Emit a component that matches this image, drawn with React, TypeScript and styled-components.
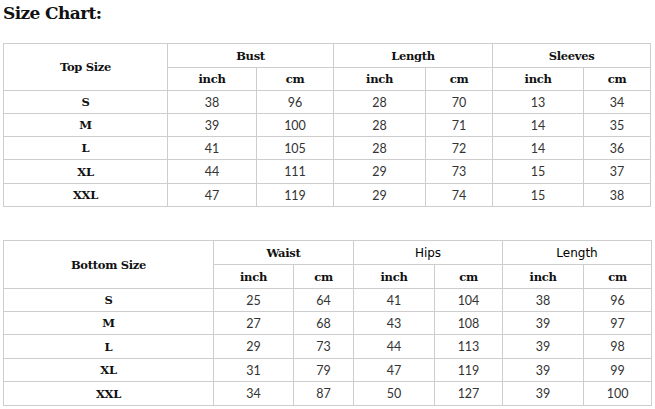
import React from "react";
import styled, { createGlobalStyle } from "styled-components";

const Global = createGlobalStyle`
  html, body { margin: 0; padding: 0; background: #fff; }
  body { width: 655px; height: 409px; overflow: hidden; }
`;

const Page = styled.div`
  padding: 3px 0 0 3px;
  display: flex;
  flex-direction: column;
`;

const Title = styled.h1`
  margin: 0;
  height: 40px;
  font-family: "DejaVu Serif", serif;
  font-weight: bold;
  font-size: 17px;
  line-height: 20px;
  color: #111;
  letter-spacing: -0.6px;
`;

const Table = styled.table<{ $mb?: number }>`
  border-collapse: collapse;
  table-layout: fixed;
  margin-bottom: ${(p) => p.$mb ?? 0}px;
`;

const Row = styled.tr<{ $h: number }>`
  height: ${(p) => p.$h}px;
`;

const Cell = styled.td`
  border: 1px solid #cdcdcd;
  padding: 0;
  text-align: center;
  vertical-align: middle;
  overflow: hidden;
  white-space: nowrap;
`;

const SlabCell = styled(Cell)`
  font-family: "DejaVu Serif", serif;
  font-weight: bold;
  font-size: 11.5px;
  color: #111;
  letter-spacing: -0.3px;
`;

const SansHead = styled(Cell)`
  font-family: "DejaVu Sans", sans-serif;
  font-size: 12px;
  color: #000;
`;

const NumCell = styled(Cell)`
  font-family: Lato, "Open Sans", sans-serif;
  font-size: 12.5px;
  color: #333;
`;

type Group = { name: string; sans?: boolean };

type ChartProps = {
  label: string;
  widths: number[];
  heights: number[];
  groups: Group[];
  rows: [string, ...number[]][];
  mb?: number;
};

function Chart({ label, widths, heights, groups, rows, mb }: ChartProps) {
  const total = widths.reduce((a, b) => a + b, 0);
  return (
    <Table $mb={mb} style={{ width: total }}>
      <colgroup>
        {widths.map((w, i) => (
          <col key={i} style={{ width: w }} />
        ))}
      </colgroup>
      <tbody>
        <Row $h={heights[0]}>
          <SlabCell rowSpan={2}>{label}</SlabCell>
          {groups.map((g) =>
            g.sans ? (
              <SansHead key={g.name} colSpan={2}>
                {g.name}
              </SansHead>
            ) : (
              <SlabCell key={g.name} colSpan={2}>
                {g.name}
              </SlabCell>
            )
          )}
        </Row>
        <Row $h={heights[1]}>
          {groups.map((g) => (
            <React.Fragment key={g.name}>
              <SlabCell>inch</SlabCell>
              <SlabCell>cm</SlabCell>
            </React.Fragment>
          ))}
        </Row>
        {rows.map(([size, ...vals], i) => (
          <Row key={size} $h={heights[i + 2]}>
            <SlabCell>{size}</SlabCell>
            {vals.map((v, j) => (
              <NumCell key={j}>{v}</NumCell>
            ))}
          </Row>
        ))}
      </tbody>
    </Table>
  );
}

export default function App() {
  return (
    <Page>
      <Global />
      <Title>Size Chart:</Title>
      <Chart
        label="Top Size"
        widths={[164, 89, 77, 92, 67, 91, 67]}
        heights={[24, 23, 23, 23, 23, 24, 23]}
        groups={[{ name: "Bust" }, { name: "Length" }, { name: "Sleeves" }]}
        rows={[
          ["S", 38, 96, 28, 70, 13, 34],
          ["M", 39, 100, 28, 71, 14, 35],
          ["L", 41, 105, 28, 72, 14, 36],
          ["XL", 44, 111, 29, 73, 15, 37],
          ["XXL", 47, 119, 29, 74, 15, 38],
        ]}
        mb={33}
      />
      <Chart
        label="Bottom Size"
        widths={[210, 80, 60, 81, 68, 81, 68]}
        heights={[24, 24, 23, 23, 24, 23, 24]}
        groups={[{ name: "Waist" }, { name: "Hips", sans: true }, { name: "Length", sans: true }]}
        rows={[
          ["S", 25, 64, 41, 104, 38, 96],
          ["M", 27, 68, 43, 108, 39, 97],
          ["L", 29, 73, 44, 113, 39, 98],
          ["XL", 31, 79, 47, 119, 39, 99],
          ["XXL", 34, 87, 50, 127, 39, 100],
        ]}
      />
    </Page>
  );
}
